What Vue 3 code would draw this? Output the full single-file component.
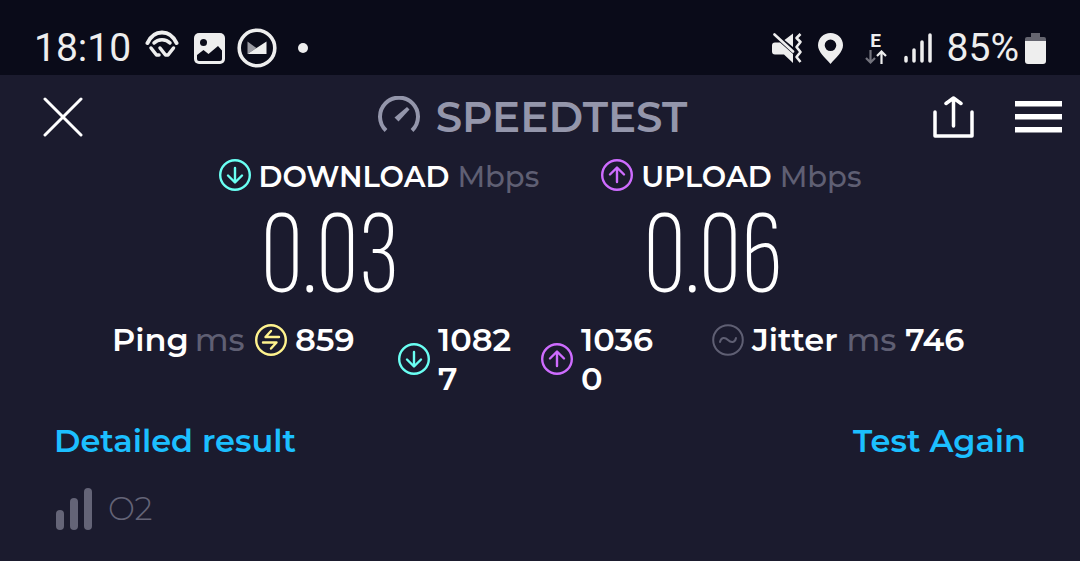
<script setup>
const arrows = { down: 'M16 9v14M9 16.500l7 7 7-7', up: 'M16 23V9M9 15.500l7-7 7 7' }
const speeds = [
  { name: 'DOWNLOAD', value: '0.03', dir: 'down' },
  { name: 'UPLOAD', value: '0.06', dir: 'up' },
]
const latencies = [
  { label: 'Download latency', value: '10827', dir: 'down' },
  { label: 'Upload latency', value: '10360', dir: 'up' },
]
</script>

<template>
  <div class="screen">
    <div class="status">
      <div class="side left">
        <span class="clock">18:10</span>
        <svg class="wifi" width="34" height="28" viewBox="0 0 34 28" fill="none" stroke="#eee" stroke-width="4" stroke-linecap="round">
          <path d="M2.500 13C6 5.500 11 2.500 17 2.500S28 5.500 31.500 13" />
          <path d="M9 13c4-4.500 12-4.500 16 0" stroke-width="3.500" />
          <path d="M6 18l5.500 7H14M28.500 18L23 25h-2.500L15 18" stroke-width="3.500" stroke-linejoin="round" />
        </svg>
        <svg class="photo" width="31" height="31" viewBox="0 0 31 31">
          <rect width="31" height="31" rx="5" fill="#eee" />
          <circle cx="9.500" cy="9.500" r="3.500" fill="#0a0b19" />
          <path d="M3 22l6.500-5 5 4L24 13l4 4.500V26q0 2-2 2H5q-2 0-2-2z" fill="#0a0b19" />
        </svg>
        <svg class="mail" width="40" height="40" viewBox="0 0 40 40">
          <circle cx="20" cy="20" r="17.800" fill="none" stroke="#eee" stroke-width="3.600" />
          <path d="M10.500 13.500L19.500 20l-9 6z" fill="#9a9aa2" />
          <path d="M10.500 26L19.500 20 29.500 13.500V26z" fill="#eee" />
        </svg>
        <span class="dot"></span>
      </div>
      <div class="side right">
        <svg class="mute" width="31" height="30" viewBox="0 0 31 30" fill="#eee">
          <path d="M3 9.500h5L21 21v9l-9-8.500H3q-3 0-3-3v-6q0-3 3-3zM12.500 7L21 .500V14z" />
          <path d="M2.500 1.500L21 18.500" fill="none" stroke="#eee" stroke-width="2.600" stroke-linecap="round" />
          <path d="M28.500 1l-4 4 4 4-4 5 4 5-4 5 4 5" fill="none" stroke="#eee" stroke-width="2.600" stroke-linejoin="round" />
        </svg>
        <svg class="pin" width="25" height="31" viewBox="0 0 25 31"><path fill="#eee" fill-rule="evenodd" d="M12.500 0C5.500 0 0 5.400 0 12.300 0 19 7 24.500 12.500 31 18 24.500 25 19 25 12.300 25 5.400 19.500 0 12.500 0zm0 6.500a5.800 5.800 0 1 1 0 11.600 5.800 5.800 0 0 1 0-11.600z" /></svg>
        <span class="network">
          <span>E</span>
          <svg width="22" height="14" viewBox="0 0 22 14" fill="none" stroke-width="2.200">
            <path d="M5.500 0v12M1 8l4.500 4.500L10 8" stroke="#73737d" />
            <path d="M16.500 14V2M12 6l4.500-4.500L21 6" stroke="#eee" />
          </svg>
        </span>
        <svg class="signal" width="29" height="30" viewBox="0 0 29 30" stroke="#eee" stroke-width="3.500" stroke-linecap="round"><path d="M2 24.500V28M10 17v11M18 9v19M26 2v26" /></svg>
        <span class="percent">85%</span>
        <svg class="battery" width="21" height="31" viewBox="0 0 21 31">
          <path d="M6 0h9v4h4q2 0 2 2v3H0V6q0-2 2-2h4z" fill="#65656f" />
          <path d="M0 8h21v20q0 3-3 3H3q-3 0-3-3z" fill="#eee" />
        </svg>
      </div>
    </div>

    <header>
      <button class="close" aria-label="Close"><svg width="40" height="40" viewBox="0 0 40 40" fill="none" stroke="#fff" stroke-width="3" stroke-linecap="round"><path d="M2 2l36 36M38 2L2 38" /></svg></button>
      <h1>
        <svg width="42" height="36" viewBox="0 0 42 36" fill="none" stroke="#9496ab" stroke-width="4">
          <path d="M8 34.500A19 19 0 1 1 34 34.500" />
          <path d="M29 11L31.500 13.500 20.500 25.500 16.500 21.500z" fill="#9496ab" stroke="none" />
        </svg>
        SPEEDTEST
      </h1>
      <div class="actions">
        <button aria-label="Share"><svg width="41" height="42" viewBox="0 0 41 42" fill="none" stroke="#fff" stroke-width="3.500" stroke-linecap="round" stroke-linejoin="round"><path d="M2 16v24h37V16M20.500 30V2M13 7.500l7.500-5.500L28 7.500" /></svg></button>
        <button aria-label="Menu"><svg width="47" height="32" viewBox="0 0 47 32" fill="#fff"><path d="M0 0h47v5.500H0zM0 13h47v5.500H0zM0 26h47v5.500H0z" /></svg></button>
      </div>
    </header>

    <main>
      <section class="speeds">
        <div v-for="s in speeds" :key="s.name">
          <h2>
            <svg :class="s.dir" class="ring" viewBox="0 0 32 32"><circle cx="16" cy="16" r="14.800" /><path :d="arrows[s.dir]" /></svg>
            <span>{{ s.name }} <span class="unit">Mbps</span></span>
          </h2>
          <p class="value">{{ s.value }}</p>
        </div>
      </section>

      <section class="ping">
        <div class="metric">
          <span class="label">Ping <span class="unit">ms</span></span>
          <svg class="ring idle" viewBox="0 0 32 32"><circle cx="16" cy="16" r="14.800" /><path d="M16 7l-5.500 6H24M8 18.500h13.500L16 24.500" /></svg>
          <span>859</span>
        </div>
        <div v-for="l in latencies" :key="l.dir" class="metric">
          <svg class="ring" :class="l.dir" role="img" :aria-label="l.label" viewBox="0 0 32 32"><circle cx="16" cy="16" r="14.800" /><path :d="arrows[l.dir]" /></svg>
          <span class="wrap">{{ l.value }}</span>
        </div>
        <div class="metric last">
          <svg class="ring jitter" viewBox="0 0 32 32"><circle cx="16" cy="16" r="14.800" /><path d="M8 18c1-5 5-5 8-2s7 3 8-2" /></svg>
          <span>Jitter <span class="unit">ms</span> 746</span>
        </div>
      </section>

      <nav>
        <a href="#details">Detailed result</a>
        <a href="#again">Test Again</a>
      </nav>

      <div class="carrier">
        <svg width="36" height="42" viewBox="0 0 36 42" fill="#646477"><rect y="22" width="8" height="20" rx="4" /><rect x="14" y="10" width="8" height="32" rx="4" /><rect x="28" width="8" height="42" rx="4" /></svg>
        <span>O2</span>
      </div>
    </main>
  </div>
</template>

<style>
body { background: #1b1b2e; }
</style>

<style scoped>
* { box-sizing: border-box; }
.screen { min-height: 100vh; background: #1b1b2e; color: #fff; font-family: Montserrat, Inter, sans-serif; font-weight: 600; }
svg { display: block; flex: none; }
h1, h2, p { margin: 0; }
button { padding: 0; border: 0; background: none; cursor: pointer; }
.status { display: flex; justify-content: space-between; padding: 21px 34px 0; height: 75px; background: #0a0b19; color: #eee; font: 400 39px/54px Roboto, sans-serif; }
.side { display: flex; align-items: center; height: 54px; }
.photo { margin-left: 15px; }
.wifi { margin-left: 14px; margin-top: -8px; }
.mail { margin-left: 12px; }
.dot { width: 10px; height: 10px; margin-left: 21px; border-radius: 50%; background: #eee; }
.pin { margin-left: 15px; }
.network { display: flex; flex-direction: column; align-items: center; margin-left: 22px; font: 700 19px/18px Roboto, sans-serif; }
.signal { margin-left: 17px; }
.percent { margin-left: 14px; }
.battery { margin-left: 6px; }
header { display: grid; grid-template-columns: 1fr auto 1fr; align-items: center; height: 84px; padding: 0 18px; }
h1 { display: flex; align-items: center; gap: 16px; margin-right: 15px; color: #9496ab; font-size: 42px; font-weight: 600; line-height: 48px; }
h1 svg { margin-bottom: 6px; }
.close { justify-self: start; margin-left: 25px; }
.actions { display: flex; align-items: center; justify-content: flex-end; gap: 41px; }
main { padding: 0 54px; }
.speeds { display: flex; justify-content: center; gap: 62px; }
h2 { display: flex; align-items: center; gap: 8px; font-size: 29px; font-weight: 600; line-height: 36px; }
h2 .ring { margin-bottom: 4px; }
.unit { color: #5f5f73; font-weight: 500; }
.value { padding-left: 42px; font: 200 121px/122px "Sofia Sans Extra Condensed", "Barlow Condensed", "Roboto Condensed", Roboto, sans-serif; }
.ring { width: 32px; height: 32px; fill: none; stroke-width: 2.400; stroke-linecap: round; stroke-linejoin: round; }
.down { stroke: #6afff3; }
.up { stroke: #ce6cff; }
.idle { stroke: #fff38e; }
.jitter { stroke: #5f5f73; stroke-width: 2; }
.ping { display: grid; grid-template-columns: 261px 118px 118px 284px; justify-content: center; align-items: start; column-gap: 25px; margin-top: 3px; font-size: 32px; line-height: 39px; }
.metric { display: flex; align-items: center; gap: 8px; white-space: nowrap; }
.label { display: flex; gap: 6px; min-width: 135px; }
.last { padding-left: 28px; }
.wrap { overflow-wrap: anywhere; white-space: normal; }
nav { display: flex; justify-content: space-between; margin-top: 23px; font-size: 32px; line-height: 40px; }
nav a { color: #1cbfff; text-decoration: none; }
.carrier { display: flex; align-items: center; gap: 16px; margin-top: 25px; padding-left: 2px; color: #646477; font-size: 32px; font-weight: 300; line-height: 45px; }
</style>
